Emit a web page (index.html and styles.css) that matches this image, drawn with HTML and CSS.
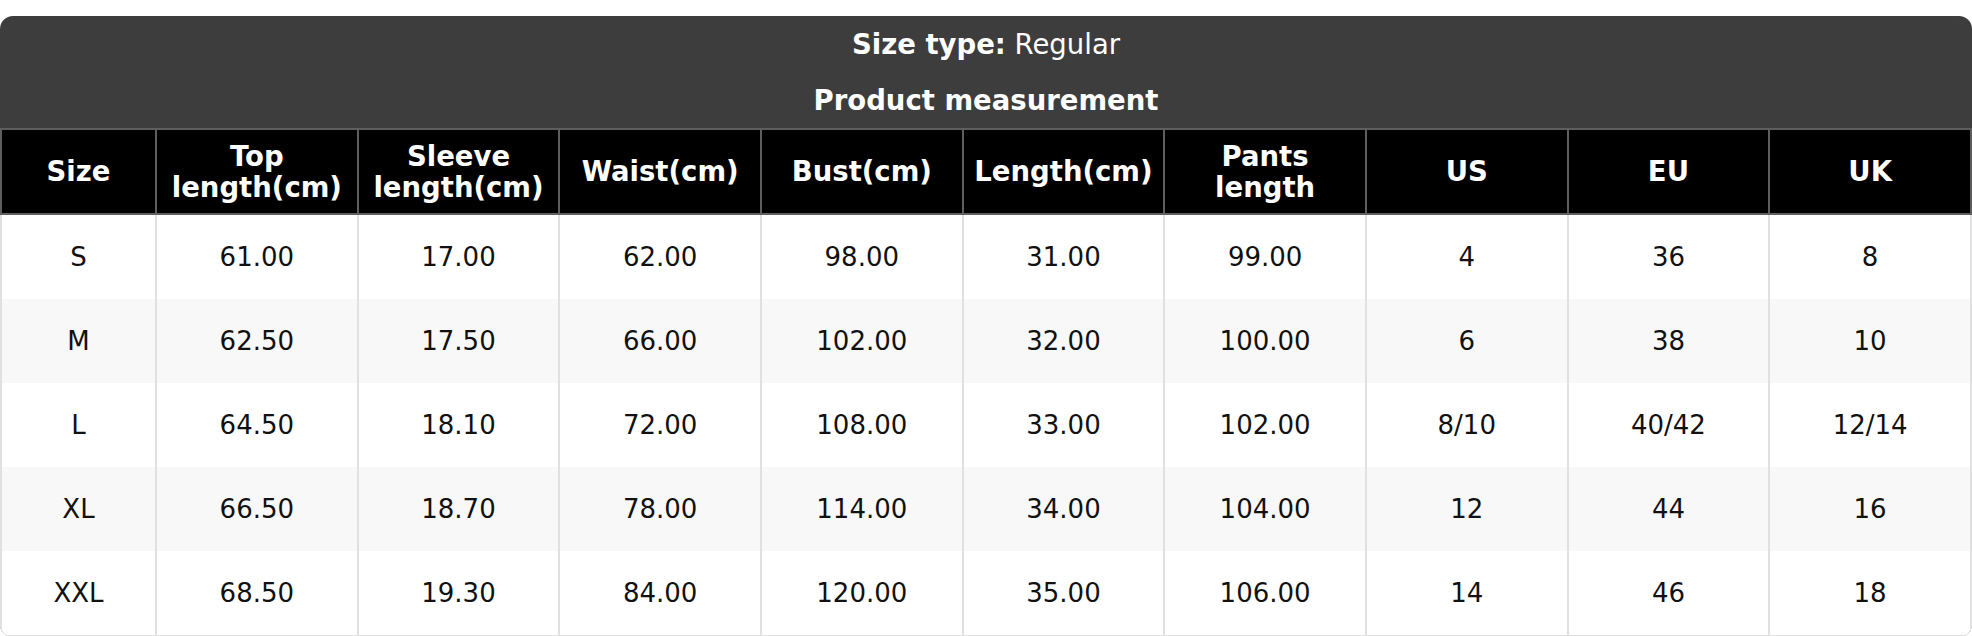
FILE: index.html
```html
<!DOCTYPE html>
<html>
<head>
<meta charset="utf-8">
<link rel="stylesheet" href="styles.css">
</head>
<body>
<div class="chart">
  <div class="title"><b>Size type:</b> Regular</div>
  <div class="subtitle">Product measurement</div>
  <table class="grid">
    <colgroup>
      <col class="col-size">
      <col><col><col><col><col><col><col><col><col>
    </colgroup>
    <thead>
      <tr>
        <th>Size</th>
        <th>Top<br>length(cm)</th>
        <th>Sleeve<br>length(cm)</th>
        <th>Waist(cm)</th>
        <th>Bust(cm)</th>
        <th>Length(cm)</th>
        <th>Pants<br>length</th>
        <th>US</th>
        <th>EU</th>
        <th>UK</th>
      </tr>
    </thead>
    <tbody>
      <tr><td>S</td><td>61.00</td><td>17.00</td><td>62.00</td><td>98.00</td><td>31.00</td><td>99.00</td><td>4</td><td>36</td><td>8</td></tr>
      <tr><td>M</td><td>62.50</td><td>17.50</td><td>66.00</td><td>102.00</td><td>32.00</td><td>100.00</td><td>6</td><td>38</td><td>10</td></tr>
      <tr><td>L</td><td>64.50</td><td>18.10</td><td>72.00</td><td>108.00</td><td>33.00</td><td>102.00</td><td>8/10</td><td>40/42</td><td>12/14</td></tr>
      <tr><td>XL</td><td>66.50</td><td>18.70</td><td>78.00</td><td>114.00</td><td>34.00</td><td>104.00</td><td>12</td><td>44</td><td>16</td></tr>
      <tr><td>XXL</td><td>68.50</td><td>19.30</td><td>84.00</td><td>120.00</td><td>35.00</td><td>106.00</td><td>14</td><td>46</td><td>18</td></tr>
    </tbody>
  </table>
</div>
</body>
</html>
```

FILE: styles.css
```css
html, body {
  margin: 0;
  padding: 0;
  background: #ffffff;
}
body {
  padding-top: 16px;
  font-family: "DejaVu Sans", sans-serif;
}
.chart {
  width: 1972px;
  box-sizing: border-box;
  background: #3d3d3d;
  border-radius: 13px;
  overflow: hidden;
}
.title {
  color: #ffffff;
  font-size: 27.5px;
  line-height: 32px;
  text-align: center;
  padding: 12px 0 12px;
}
.title b {
  font-weight: bold;
}
.subtitle {
  color: #ffffff;
  font-size: 27.5px;
  font-weight: bold;
  line-height: 32px;
  text-align: center;
  padding: 12px 0 12px;
}
.grid {
  width: 100%;
  border-collapse: collapse;
  table-layout: fixed;
  background: #ffffff;
}
.col-size {
  width: 155px;
}
.grid th {
  background: #000000;
  color: #ffffff;
  font-size: 27.5px;
  font-weight: bold;
  line-height: 31px;
  height: 83px;
  padding: 0;
  text-align: center;
  vertical-align: middle;
  border: 2px solid #5e5e5e;
}
.grid td {
  color: #111111;
  font-size: 26px;
  line-height: 30px;
  height: 84px;
  padding: 0;
  text-align: center;
  vertical-align: middle;
  border-left: 2px solid #e0e0e0;
  border-right: 2px solid #e0e0e0;
}
.grid tbody tr:nth-child(even) td {
  background: #f8f8f8;
}
.grid tbody tr:last-child td {
  border-bottom: 2px solid #e0e0e0;
}
.grid tbody tr:last-child td:first-child {
  border-bottom-left-radius: 13px;
}
.grid tbody tr:last-child td:last-child {
  border-bottom-right-radius: 13px;
}
```
